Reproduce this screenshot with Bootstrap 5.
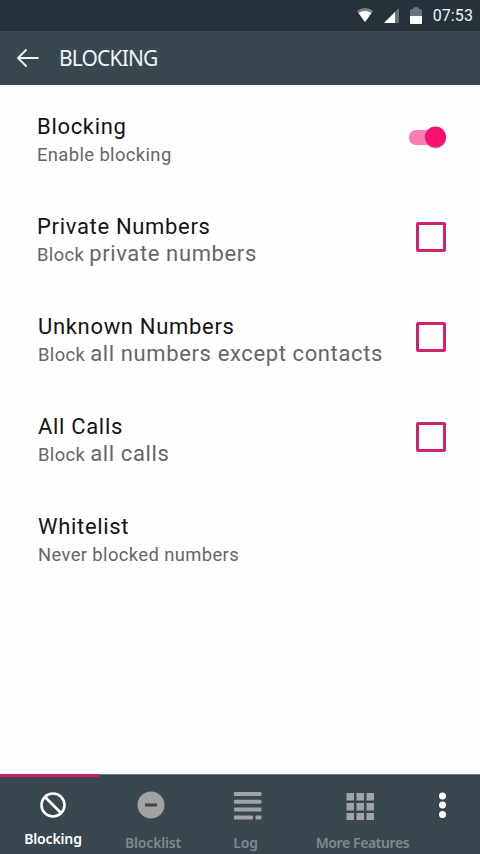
<!DOCTYPE html>
<html lang="en">
<head>
<meta charset="utf-8">
<meta name="viewport" content="width=device-width, initial-scale=1">
<title>Blocking</title>
<link href="https://cdn.jsdelivr.net/npm/bootstrap@5.3.0/dist/css/bootstrap.min.css" rel="stylesheet">
<style>
body{font-family:Roboto,"Liberation Sans",sans-serif;height:854px;overflow:hidden;background:#fefefe}
.statusbar{height:31px;background:#26323a;color:#f2f5f6;font-size:16px;padding-right:7px}
.statusbar svg{margin-right:11px}
.statusbar span{letter-spacing:.1px;line-height:31px}
.appbar{height:54px;background:#39474f;color:#eef6fa;padding:0 0 0 16px}
.appbar h1{font:400 21px/54px "Noto Sans","Open Sans",sans-serif;letter-spacing:-.85px;margin-left:20px}
.settings{padding-top:2px}
.setting{height:100px;padding:6px 34px 0 37px}
.setting h2{font-size:22px;line-height:28px;font-weight:400;color:#141414;margin:0;letter-spacing:.68px}
.setting p{font-size:18.4px;line-height:27px;color:#666;margin:0;letter-spacing:.38px;white-space:nowrap}
.setting .big{font-size:22px;letter-spacing:.62px;line-height:1}
.setting.inset{padding-left:38px}
.check{width:30px;height:30px;border:3px solid #d2226f;border-radius:2px;margin-bottom:7px}
.toggle{margin-bottom:7px}
.bottombar{height:80px;background:#39474f;border-top:1px solid #6f7b81;font:600 14px/18px "Noto Sans","Open Sans",sans-serif;letter-spacing:-.15px;color:#7f898e}
.tab{padding-top:16px}
.tab svg{display:block;height:30px}
.tab span{white-space:nowrap;margin-top:13px}
.tab.on{color:#fff;width:99px;padding-left:7px;position:relative}
.tab.on span{margin-top:9px}
.tab.on::before{content:"";position:absolute;left:0;right:0;top:-1px;height:3px;background:#d81b68}
.t2{width:103px}.t3{width:91px}.t4{width:134px}.t5{width:53px}
.t2 span{padding-left:5px}.t3 span{padding-right:4px}.t4 span{padding-left:5px;letter-spacing:-.4px}
</style>
</head>
<body class="d-flex flex-column">
<div class="statusbar d-flex align-items-center justify-content-end">
<svg width="16" height="15" viewBox="0 0 16 15"><path d="M0 3Q8-3 16 3L8 14Z" fill="#78838a"/><path d="M1.500 5Q8 1 14.500 5L8 14Z" fill="#fff"/></svg>
<svg width="15" height="15" viewBox="0 0 15 15"><path d="M0 15L15 0V15Z" fill="#65727a"/><path d="M0 15L11 4V15Z" fill="#fff"/></svg>
<svg width="12" height="18" viewBox="0 0 12 18"><path d="M0 17V4Q0 2 2 2H3Q3 0 6 0T9 2H10Q12 2 12 4V10H0Z" fill="#68747b"/><path d="M0 9H12V16Q12 17 11 17H1Q0 17 0 16Z" fill="#fff"/></svg>
<span>07:53</span>
</div>
<header class="appbar d-flex align-items-center">
<svg width="23" height="20" viewBox="0 0 23 20" fill="none" stroke="#eef6fa" stroke-width="1.8"><path d="M22.500 10H2M10.500 1.500L2 10L10.500 18.500"/></svg>
<h1 class="mb-0">BLOCKING</h1>
</header>
<main class="settings flex-grow-1">
<div class="setting d-flex align-items-center justify-content-between"><div><h2>Blocking</h2><p>Enable blocking</p></div>
<svg class="toggle" width="38" height="26" viewBox="0 0 38 26"><rect x="1" y="6" width="32" height="15" rx="7" fill="#fb7db1"/><circle cx="27.500" cy="14.300" r="10.500" fill="#999" opacity=".6"/><circle cx="27.500" cy="13" r="10.600" fill="#fb0f70"/></svg></div>
<div class="setting d-flex align-items-center justify-content-between"><div><h2>Private Numbers</h2><p>Block <span class="big">private numbers</span></p></div><div class="check"></div></div>
<div class="setting inset d-flex align-items-center justify-content-between"><div><h2>Unknown Numbers</h2><p>Block <span class="big">all numbers except contacts</span></p></div><div class="check"></div></div>
<div class="setting inset d-flex align-items-center justify-content-between"><div><h2>All Calls</h2><p>Block <span class="big">all calls</span></p></div><div class="check"></div></div>
<div class="setting inset d-flex align-items-center"><div><h2>Whitelist</h2><p>Never blocked numbers</p></div></div>
</main>
<nav class="bottombar d-flex">
<div class="tab on d-flex flex-column align-items-center"><svg width="28" viewBox="0 0 28 30" fill="none" stroke="#fff" stroke-width="2.600"><circle cx="14" cy="14" r="11.500"/><path d="M6 6L22 22"/></svg><span>Blocking</span></div>
<div class="tab t2 d-flex flex-column align-items-center"><svg width="28" viewBox="0 0 28 30"><circle cx="14" cy="14" r="13.500" fill="#a0a2a4"/><path d="M8 14H20" stroke="#39474f" stroke-width="3"/></svg><span>Blocklist</span></div>
<div class="tab t3 d-flex flex-column align-items-center"><svg width="28" viewBox="0 0 28 30" fill="#a0a4aa"><rect y="1" width="27.500" height="4" rx="1"/><rect y="8.700" width="27.500" height="4" rx="1"/><rect y="16.500" width="27.500" height="4" rx="1"/><rect y="24.500" width="19" height="4" rx="1"/><rect x="21.500" y="24.500" width="6" height="4" rx="1"/></svg><span>Log</span></div>
<div class="tab t4 d-flex flex-column align-items-center"><svg width="28" viewBox="0 0 28 30" fill="#a0a4aa"><path d="M.5 2h7.500v7.500h-7.500zM10.500 2h7.500v7.500h-7.500zM20.500 2h7.500v7.500h-7.500zM.5 12h7.500v7.500h-7.500zM10.500 12h7.500v7.500h-7.500zM20.500 12h7.500v7.500h-7.500zM.5 22h7.500v7h-7.500zM10.500 22h7.500v7h-7.500zM20.500 22h7.500v7h-7.500z"/></svg><span>More Features</span></div>
<div class="tab t5"><svg width="28" viewBox="0 0 28 30" fill="#fff"><circle cx="15.500" cy="5" r="3.500"/><circle cx="15.500" cy="14" r="3.500"/><circle cx="15.500" cy="23.500" r="3.500"/></svg></div>
</nav>
<script src="https://cdn.jsdelivr.net/npm/bootstrap@5.3.0/dist/js/bootstrap.bundle.min.js"></script>
</body>
</html>
